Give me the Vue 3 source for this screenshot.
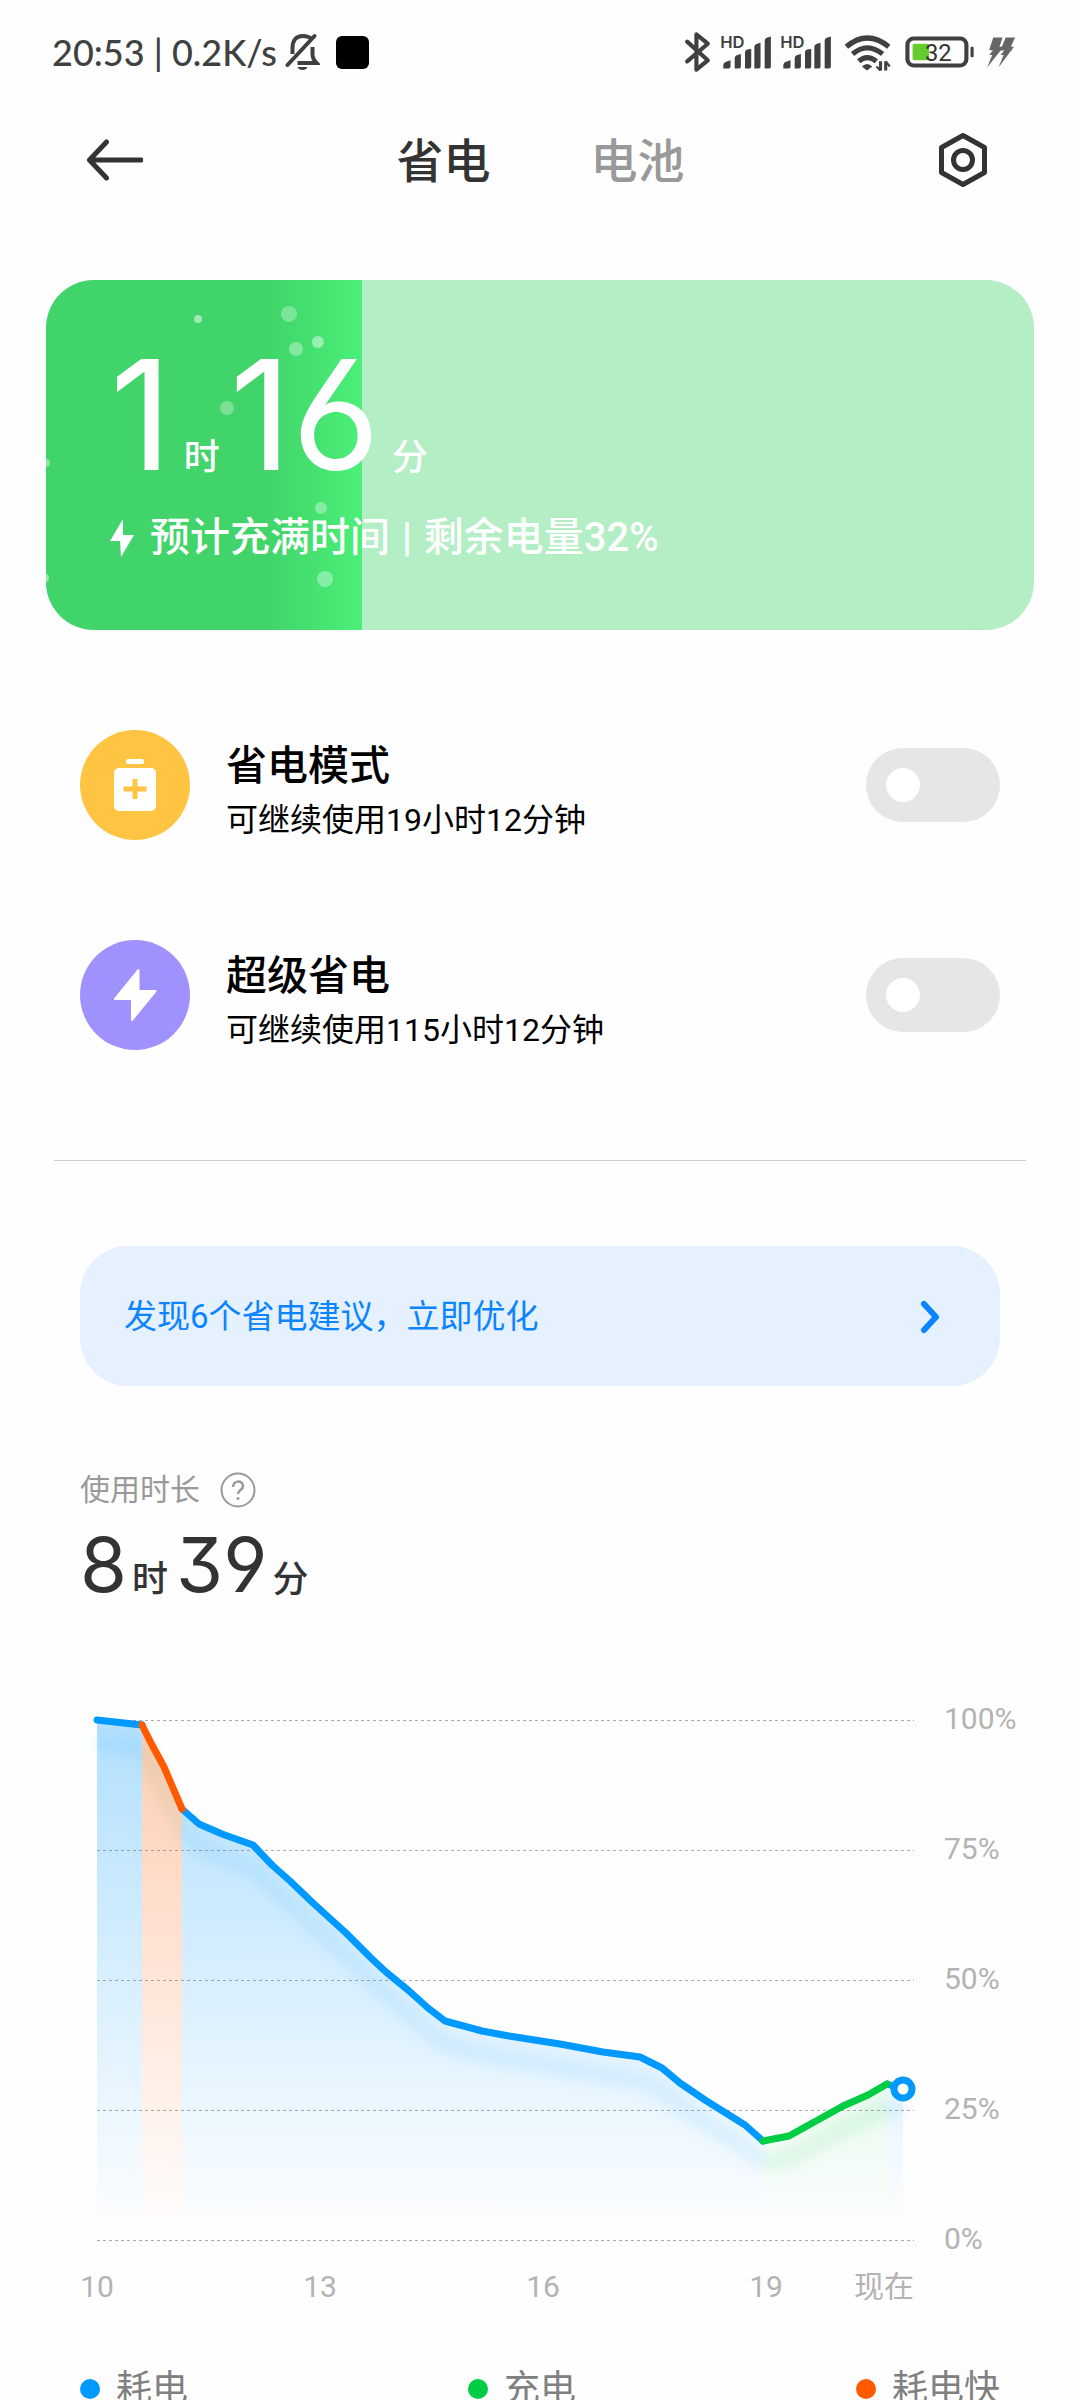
<script setup>
import { ref } from 'vue'

const modes = ref([
  { id: 'saver', title: '省电模式', note: '可继续使用19小时12分钟', on: false },
  { id: 'ultra', title: '超级省电', note: '可继续使用115小时12分钟', on: false },
])

const level = 32

const bubbles = [
  { x: 152, y: 39, r: 4, o: 0.5 },
  { x: 243, y: 34, r: 8, o: 0.3 },
  { x: 272, y: 62, r: 6, o: 0.45 },
  { x: 250, y: 69, r: 7, o: 0.35 },
  { x: 181, y: 128, r: 7, o: 0.3 },
  { x: 0, y: 183, r: 4, o: 0.4 },
  { x: 275, y: 228, r: 6, o: 0.35 },
  { x: 279, y: 299, r: 8, o: 0.35 },
  { x: -2, y: 298, r: 5, o: 0.45 },
]

const gridLines = [
  { y: 30, label: '100%' },
  { y: 160, label: '75%' },
  { y: 290, label: '50%' },
  { y: 420, label: '25%' },
  { y: 550, label: '0%' },
]

const hours = [
  { x: 97, label: '10' },
  { x: 320, label: '13' },
  { x: 543, label: '16' },
  { x: 766, label: '19' },
]

const segments = [
  { kind: 'use', pts: [[97, 30], [142, 35]] },
  {
    kind: 'use',
    pts: [[182, 119], [199, 134], [222, 144], [253, 155], [272, 175], [290, 191], [313, 213], [346, 243], [371, 268], [386, 282], [408, 300], [428, 318], [445, 331], [482, 341], [509, 346], [560, 354], [603, 362], [640, 367], [662, 378], [680, 393], [705, 410], [745, 435], [763, 451]],
  },
  { kind: 'use', pts: [[887, 394], [903, 399]] },
  { kind: 'fast', pts: [[142, 35], [151, 53], [164, 77], [182, 119]] },
  { kind: 'charge', pts: [[763, 451], [789, 446], [843, 416], [868, 405], [887, 394]] },
]

const colors = { use: '#0099ff', charge: '#00cc44', fast: '#ff5a00' }
const line = (pts) => pts.map((p) => p.join(',')).join(' ')
const area = (pts) => `${pts[0][0]},550 ${line(pts)} ${pts[pts.length - 1][0]},550`

const legend = [
  { kind: 'use', label: '耗电' },
  { kind: 'charge', label: '充电' },
  { kind: 'fast', label: '耗电快' },
]
</script>

<template>
  <div class="page">
    <div class="status">
      <div class="status-left">
        <span class="clock">20:53 | 0.2K/s</span>
        <svg width="35" height="40" viewBox="0 0 34 40" fill="none" stroke="#404040" stroke-width="4">
          <path d="M7 22V16C7 8 11 4 17 4C21 4 24 5 26 7" />
          <path d="M2 33L29 4" stroke-linecap="round" />
          <path d="M27 15V22Q27 27 31 31H12" />
          <path d="M12 35H22Q21 38 17 38Q13 38 12 35Z" fill="#404040" stroke="none" />
        </svg>
        <span class="app-dot"></span>
      </div>
      <svg width="331" height="46" viewBox="680 30 320 44" fill="none">
        <path d="M683 42L703 60L692 69V35L703 44L683 61" stroke="#404040" stroke-width="4" stroke-linecap="round" stroke-linejoin="round" />
        <g v-for="dx in [0, 58]" :key="dx" :transform="`translate(${dx} 0)`" fill="#404040">
          <text x="715" y="48" class="hd">HD</text>
          <path d="M718 68V65Q718 62 722 61L725 60V66Q725 68 723 68ZM729 68V58Q729 55 735 54V66Q735 68 733 68ZM739 68V52Q739 49 745 49V66Q745 68 743 68ZM748 68V47Q748 44 754 43V66Q754 68 752 68ZM758 68V41Q758 38 764 37V66Q764 68 762 68Z" />
        </g>
        <g stroke="#404040" stroke-width="5">
          <path d="M837 47Q857 30 878 47" />
          <path d="M843 54Q857 42 872 54" />
          <path d="M849 61Q857 54 866 61" />
          <path d="M852 66Q857 61 862 66L857 70Z" fill="#404040" stroke="none" />
          <path d="M870 61V70M875 61V70" stroke-width="3" />
          <path d="M866 66L870 70M879 66L875 61" stroke-width="2" />
        </g>
        <rect x="896" y="39" width="57" height="26" rx="6" stroke="#404040" stroke-width="4" />
        <rect x="901" y="44" width="16" height="16" rx="2" fill="#66cc2e" />
        <rect x="957" y="47" width="3" height="10" rx="1" fill="#404040" />
        <text x="913" y="61" class="battery-text">32</text>
        <path d="M979 38H988L985 47H989L973 67L978 55H975L979 50H975ZM991 38H1000L996 47H999L984 67L989 55H986L990 50H986Z" fill="#666" />
        <path d="M977 49H997" stroke="#666" stroke-width="3" />
      </svg>
    </div>

    <header class="header">
      <button class="icon-btn" type="button" aria-label="返回">
        <svg width="58" height="56" viewBox="0 0 58 56" fill="none" stroke="#333" stroke-width="5" stroke-linecap="round" stroke-linejoin="round">
          <path d="M56 28H4.500M21.500 10L4.500 28L21.500 46" />
        </svg>
      </button>
      <nav class="tabs">
        <button class="tab active" type="button">省电</button>
        <button class="tab" type="button">电池</button>
      </nav>
      <button class="icon-btn" type="button" aria-label="设置">
        <svg width="50" height="56" viewBox="0 0 50 56" fill="none" stroke="#333" stroke-width="5" stroke-linejoin="round">
          <path d="M25 3.500L46.500 15.500V40.500L25 52.500L3.500 40.500V15.500Z" />
          <circle cx="25" cy="28" r="9.500" />
        </svg>
      </button>
    </header>

    <section class="card">
      <div class="fill" :style="{ width: level + '%' }"></div>
      <svg class="bubbles" width="316" height="350" viewBox="0 0 316 350">
        <circle v-for="(b, i) in bubbles" :key="i" :cx="b.x" :cy="b.y" :r="b.r" fill="#fff" :fill-opacity="b.o" />
      </svg>
      <div class="card-body">
        <div class="remain">
          <span class="remain-num">1</span><span class="remain-unit">时</span>
          <span class="remain-num">16</span><span class="remain-unit">分</span>
        </div>
        <div class="hint">
          <svg width="24" height="38" viewBox="0 0 24 38"><path d="M13 0L0 22H10L11 38L24 16H13Z" fill="#fff" /></svg>
          <span>预计充满时间<span class="bar"> | </span>剩余电量{{ level }}%</span>
        </div>
      </div>
    </section>

    <section class="modes">
      <label v-for="m in modes" :key="m.id" class="mode" :for="m.id">
        <svg v-if="m.id === 'saver'" width="110" height="110" viewBox="0 0 110 110">
          <circle cx="55" cy="55" r="55" fill="#ffc542" />
          <rect x="46" y="29" width="18" height="5" rx="2" fill="#fff" />
          <rect x="34" y="38" width="42" height="43" rx="5" fill="#fff" />
          <path d="M55 49V69M43.500 59H66.500" stroke="#ffc542" stroke-width="5" />
        </svg>
        <svg v-else width="110" height="110" viewBox="0 0 110 110">
          <circle cx="55" cy="55" r="55" fill="#9f92ff" />
          <path d="M58.500 30L35 59H52V80L75.500 51H58.500Z" fill="#fff" stroke="#fff" stroke-width="2" stroke-linejoin="round" />
        </svg>
        <span class="mode-text">
          <span class="mode-title">{{ m.title }}</span>
          <span class="mode-note">{{ m.note }}</span>
        </span>
        <input :id="m.id" v-model="m.on" class="switch" type="checkbox" />
      </label>
    </section>

    <hr class="divider" />

    <button class="suggest" type="button">
      <span>发现6个省电建议，立即优化</span>
      <svg width="20" height="34" viewBox="0 0 20 34" fill="none" stroke="#0d84ff" stroke-width="6" stroke-linecap="round" stroke-linejoin="round"><path d="M4 4L16 17L4 30" /></svg>
    </button>

    <section class="usage">
      <div class="usage-label">
        <span>使用时长</span>
        <svg width="36" height="36" viewBox="0 0 36 36" fill="none" stroke="#999" stroke-width="2">
          <circle cx="18" cy="18" r="16.500" />
          <path d="M13 15C13 8 23 8 23 14C23 18 18 18 18 22" stroke-width="2.500" />
          <circle cx="18" cy="26.500" r="1.500" fill="#999" stroke="none" />
        </svg>
      </div>
      <div class="duration">
        <span class="dur-num">8</span><span class="dur-unit">时</span>
        <span class="dur-num">39</span><span class="dur-unit">分</span>
      </div>
    </section>

    <svg class="chart" viewBox="0 0 1080 620" fill="none">
      <defs>
        <linearGradient v-for="(c, k) in colors" :id="'grad-' + k" :key="k" gradientUnits="userSpaceOnUse" x1="0" y1="30" x2="0" y2="550">
          <stop offset="0" :stop-color="c" stop-opacity="0.3" />
          <stop offset="1" :stop-color="c" stop-opacity="0" />
        </linearGradient>
        <filter id="soft" filterUnits="userSpaceOnUse" x="0" y="0" width="1080" height="620">
          <feGaussianBlur stdDeviation="7" />
        </filter>
      </defs>
      <polygon v-for="(s, i) in segments" :key="'a' + i" :points="area(s.pts)" :fill="`url(#grad-${s.kind})`" />
      <g filter="url(#soft)" transform="translate(0 23)" opacity="0.1">
        <polyline v-for="(s, i) in segments" :key="'s' + i" :points="line(s.pts)" :stroke="s.kind === 'fast' ? '#3a9a50' : colors[s.kind]" stroke-width="14" />
      </g>
      <g v-for="g in gridLines" :key="g.label">
        <path :d="`M97 ${g.y + 0.5}H914`" stroke="#666" stroke-opacity="0.55" stroke-dasharray="3 3" />
        <text x="944" :y="g.y + 9" class="axis">{{ g.label }}</text>
      </g>
      <polyline v-for="(s, i) in segments" :key="'l' + i" :points="line(s.pts)" :stroke="colors[s.kind]" stroke-width="7" stroke-linecap="round" stroke-linejoin="round" />
      <circle cx="903" cy="399" r="9" fill="#fff" stroke="#0099ff" stroke-width="7" />
      <text v-for="h in hours" :key="h.label" :x="h.x" y="607" text-anchor="middle" class="axis">{{ h.label }}</text>
      <text x="914" y="607" text-anchor="end" class="axis">现在</text>
    </svg>

    <ul class="legend">
      <li v-for="l in legend" :key="l.kind"><i :class="['dot', l.kind]"></i>{{ l.label }}</li>
    </ul>
  </div>
</template>

<style>
body {
  background: #fdfdfd;
}
</style>

<style scoped>
.page {
  height: 100vh;
  overflow: hidden auto;
  scrollbar-width: none;
  background: #fefefe;
  color: #000;
  font-family: Roboto, "Noto Sans CJK SC", sans-serif;
}
button {
  border: 0;
  padding: 0;
  background: none;
  font: inherit;
  color: inherit;
}
svg {
  display: block;
  flex: none;
}
.status {
  display: flex;
  justify-content: space-between;
  align-items: center;
  height: 104px;
  padding: 0 65px 0 52px;
}
.status-left {
  display: flex;
  align-items: center;
  gap: 8px;
}
.clock {
  font: 500 36px/40px Lato, sans-serif;
  color: #404040;
}
.app-dot {
  width: 33px;
  height: 33px;
  margin-left: 8px;
  border-radius: 6px;
  background: #000;
}
.hd {
  font: 600 16px Inter, sans-serif;
}
.battery-text {
  font: 400 23px Roboto, sans-serif;
  fill: #333;
}
.header {
  display: flex;
  justify-content: space-between;
  align-items: center;
  height: 112px;
  padding: 0 92px 0 85px;
}
.tabs {
  display: flex;
  gap: 100px;
  padding-top: 4px;
}
.tab {
  font-size: 47px;
  line-height: 64px;
  font-weight: 500;
  color: #999;
}
.tab.active {
  color: #333;
}
.card {
  position: relative;
  margin: 64px 46px 0;
  border-radius: 48px;
  overflow: hidden;
  background: #b3eec5;
  color: #fff;
}
.fill {
  position: absolute;
  inset: 0 auto 0 0;
  background: linear-gradient(90deg, #41d46a 70%, #4bef78);
}
.bubbles {
  position: absolute;
  left: 0;
  top: 0;
}
.card-body {
  position: relative;
  padding: 58px 64px 68px;
}
.remain,
.duration {
  display: flex;
  align-items: baseline;
  font-family: Inter, "Noto Sans CJK SC", sans-serif;
  font-feature-settings: "cv03", "cv04", "cv09";
}
.remain-num {
  font-size: 152px;
  line-height: 154px;
}
.remain-unit {
  margin: 0 10px 0 12px;
  font-size: 36px;
  line-height: 36px;
  font-weight: 500;
}
.hint {
  display: flex;
  align-items: center;
  gap: 16px;
  margin-top: 22px;
  font-size: 40px;
  line-height: 48px;
  font-weight: 500;
}
.bar {
  margin: 0 2px;
}
.modes {
  display: flex;
  flex-direction: column;
  gap: 100px;
  margin: 100px 80px 0;
}
.mode {
  display: flex;
  align-items: center;
  gap: 36px;
}
.mode-text {
  display: flex;
  flex: 1;
  flex-direction: column;
  gap: 4px;
  padding-top: 2px;
}
.mode-title {
  font-size: 41px;
  line-height: 64px;
  font-weight: 500;
}
.mode-note {
  font-size: 32px;
  line-height: 36px;
}
.switch {
  appearance: none;
  flex: none;
  display: flex;
  align-items: center;
  width: 134px;
  height: 74px;
  margin: 0;
  padding: 0 20px;
  border-radius: 37px;
  background: #e6e6e6;
}
.switch::before {
  content: "";
  width: 34px;
  height: 34px;
  border-radius: 50%;
  background: #fff;
}
.switch:checked {
  justify-content: flex-end;
  background: #0d84ff;
}
.divider {
  height: 1px;
  margin: 110px 54px 0;
  border: 0;
  background: #ccc;
}
.suggest {
  display: flex;
  justify-content: space-between;
  align-items: center;
  width: calc(100% - 160px);
  height: 140px;
  margin: 85px 80px 0;
  padding: 2px 60px 0 44px;
  border-radius: 48px;
  background: #e5f1ff;
  color: #0d84ff;
  font-size: 33px;
  line-height: 48px;
}
.usage {
  margin: 84px 80px 0;
}
.usage-label {
  display: flex;
  align-items: center;
  gap: 20px;
  color: #999;
  font-size: 30px;
  line-height: 40px;
}
.duration {
  margin-top: 14px;
  color: #333;
}
.dur-num {
  font-size: 76px;
  line-height: 80px;
}
.dur-unit {
  margin: 0 8px 0 5px;
  font-size: 36px;
  line-height: 36px;
  font-weight: 500;
}
.chart {
  width: 100%;
  margin-top: 86px;
}
.axis {
  font: 30px Roboto, "Noto Sans CJK SC", sans-serif;
  fill: #b3b3b3;
}
.legend {
  display: flex;
  justify-content: space-between;
  margin: 54px 80px 0;
  padding: 0;
  list-style: none;
  color: #808080;
  font-size: 36px;
  line-height: 50px;
}
.legend li {
  display: flex;
  align-items: center;
  gap: 16px;
}
.dot {
  width: 20px;
  height: 20px;
  border-radius: 50%;
}
.dot.use {
  background: #0099ff;
}
.dot.charge {
  background: #00cc44;
}
.dot.fast {
  background: #ff5a00;
}
</style>
